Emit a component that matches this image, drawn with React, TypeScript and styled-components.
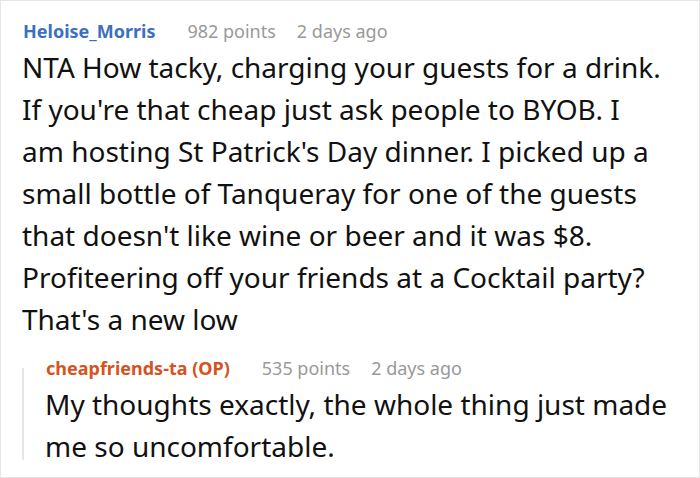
import React from "react";
import styled, { createGlobalStyle } from "styled-components";

const Global = createGlobalStyle`
  html, body { margin: 0; padding: 0; background: #fff; }
  body { font-family: "Noto Sans", "Open Sans", sans-serif; }
`;

const Card = styled.div`
  box-sizing: border-box;
  width: 700px;
  height: 478px;
  border: 1px solid #e6e6e6;
  padding: 17px 34px 0 21px;
  overflow: hidden;
`;

const Meta = styled.div`
  display: flex;
  align-items: baseline;
  font-size: 18px;
  line-height: 26px;
  padding-left: 1px;
`;

const Author = styled.span<{ $op?: boolean }>`
  font-weight: 700;
  color: ${(p) => (p.$op ? "#d4531f" : "#3b6fc1")};
`;

const Points = styled.span`
  color: #999;
  margin-left: 32px;
`;

const Time = styled.span`
  color: #999;
  margin-left: 21px;
`;

const Body = styled.p`
  margin: 2px 0 0;
  font-size: 28px;
  line-height: 42px;
  color: #111;
`;

const Reply = styled.div`
  position: relative;
  margin-top: 15px;
  margin-right: -30px;
  padding-left: 23px;

  &::before {
    content: "";
    position: absolute;
    left: 0;
    top: 13px;
    bottom: 7px;
    width: 2px;
    background: #e6e6e6;
  }
`;

export default function App() {
  return (
    <>
      <Global />
      <Card>
        <Meta>
          <Author>Heloise_Morris</Author>
          <Points>982 points</Points>
          <Time>2 days ago</Time>
        </Meta>
        <Body>
          NTA How tacky, charging your guests for a drink. If you're that cheap just ask people to BYOB. I am
          hosting St Patrick's Day dinner. I picked up a small bottle of Tanqueray for one of the guests that
          doesn't like wine or beer and it was $8. Profiteering off your friends at a Cocktail party? That's a
          new low
        </Body>
        <Reply>
          <Meta>
            <Author $op>cheapfriends-ta (OP)</Author>
            <Points>535 points</Points>
            <Time>2 days ago</Time>
          </Meta>
          <Body>My thoughts exactly, the whole thing just made me so uncomfortable.</Body>
        </Reply>
      </Card>
    </>
  );
}
